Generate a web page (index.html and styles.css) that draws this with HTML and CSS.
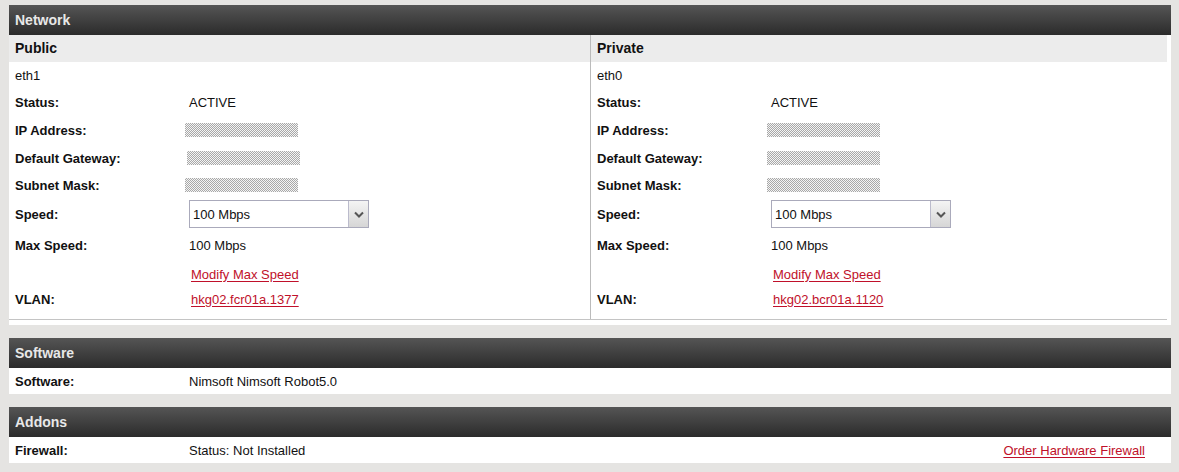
FILE: index.html
```html
<!DOCTYPE html>
<html>
<head>
  <meta charset="utf-8">
  <title>Server details</title>
<link rel="stylesheet" href="styles.css">
</head>
<body>
  <div class="panel">
    <div class="panel-head">Network</div>
    <div class="net">
      <div class="net-col">
        <div class="col-head">Public</div>
        <div class="row r-if"><span class="val-plain">eth1</span></div>
        <div class="row r-28"><span class="label">Status:</span><span class="val">ACTIVE</span></div>
        <div class="row r-28"><span class="label">IP Address:</span><span class="masked"></span></div>
        <div class="row r-28"><span class="label">Default Gateway:</span><span class="masked shift"></span></div>
        <div class="row r-26"><span class="label">Subnet Mask:</span><span class="masked"></span></div>
        <div class="row r-speed"><span class="label">Speed:</span>
          <div class="select"><span>100 Mbps</span><span class="select-btn"><svg width="10" height="7" viewBox="0 0 10 7"><path d="M1 1.5 L5 5.5 L9 1.5" fill="none" stroke="#555" stroke-width="2"/></svg></span></div>
        </div>
        <div class="row r-30"><span class="label">Max Speed:</span><span class="val">100 Mbps</span></div>
        <div class="row r-28"><span class="label"></span><a class="link" href="#">Modify Max Speed</a></div>
        <div class="row r-vlan"><span class="label">VLAN:</span><a class="link" href="#">hkg02.fcr01a.1377</a></div>
      </div>
      <div class="net-col right">
        <div class="col-head">Private</div>
        <div class="row r-if"><span class="val-plain">eth0</span></div>
        <div class="row r-28"><span class="label">Status:</span><span class="val">ACTIVE</span></div>
        <div class="row r-28"><span class="label">IP Address:</span><span class="masked"></span></div>
        <div class="row r-28"><span class="label">Default Gateway:</span><span class="masked"></span></div>
        <div class="row r-26"><span class="label">Subnet Mask:</span><span class="masked"></span></div>
        <div class="row r-speed"><span class="label">Speed:</span>
          <div class="select"><span>100 Mbps</span><span class="select-btn"><svg width="10" height="7" viewBox="0 0 10 7"><path d="M1 1.5 L5 5.5 L9 1.5" fill="none" stroke="#555" stroke-width="2"/></svg></span></div>
        </div>
        <div class="row r-30"><span class="label">Max Speed:</span><span class="val">100 Mbps</span></div>
        <div class="row r-28"><span class="label"></span><a class="link" href="#">Modify Max Speed</a></div>
        <div class="row r-vlan"><span class="label">VLAN:</span><a class="link" href="#">hkg02.bcr01a.1120</a></div>
      </div>
    </div>
    <div class="net-foot"></div>
  </div>

  <div class="panel">
    <div class="panel-head">Software</div>
    <div class="row r-single"><span class="label">Software:</span><span class="val">Nimsoft Nimsoft Robot5.0</span></div>
  </div>

  <div class="panel">
    <div class="panel-head">Addons</div>
    <div class="row r-single"><span class="label">Firewall:</span><span class="val">Status: Not Installed</span><a class="link order" href="#">Order Hardware Firewall</a></div>
  </div>
</body>
</html>
```

FILE: styles.css
```css
html {
  margin: 0;
}

body {
  margin: 0;
  padding: 5px 8px 0 9px;
  background: #e5e4e2;
  font-family: "Liberation Sans", Arial, sans-serif;
  font-size: 13px;
  color: #111;
}

.panel {
  width: 1162px;
  background: #fff;
  margin-bottom: 13px;
}

.panel-head {
  height: 30px;
  line-height: 30px;
  padding-left: 6px;
  background: linear-gradient(#555, #2b2b2b);
  color: #e8e8e8;
  font-weight: bold;
  font-size: 14px;
}

.net {
  display: flex;
  width: 1158px;
}

.net-col {
  width: 581px;
  padding-bottom: 9px;
}

.net-col.right {
  width: 576px;
  border-left: 1px solid #bbb;
}

.net-foot {
  width: 1158px;
  height: 5px;
  border-top: 1px solid #c4c4c4;
}

.col-head {
  height: 27px;
  line-height: 27px;
  padding-left: 6px;
  background: #ececec;
  font-weight: bold;
  font-size: 14px;
}

.row {
  display: flex;
  align-items: center;
  padding-left: 6px;
}

.r-if { height: 26px; }
.r-26 { height: 26px; }
.r-28 { height: 28px; }
.r-30 { height: 30px; }
.r-speed { height: 32px; }
.r-vlan { height: 22px; }
.r-single { height: 26px; padding-right: 26px; }

.label {
  width: 174px;
  flex: none;
  font-weight: bold;
}

.val-plain,
.val {
  white-space: nowrap;
}

.masked {
  width: 113px;
  height: 14px;
  margin-left: -4px;
  background: repeating-conic-gradient(#a8a8a8 0 25%, #f4f4f4 0 50%) 0 0 / 2px 2px;
}

.masked.shift {
  margin-left: -2px;
}

.select {
  display: flex;
  align-items: center;
  width: 178px;
  height: 26px;
  border: 1px solid #aab;
  background: #fff;
}

.select span:first-child {
  flex: 1;
  padding-left: 3px;
}

.select-btn {
  width: 19px;
  height: 26px;
  display: flex;
  align-items: center;
  justify-content: center;
  border-left: 1px solid #bbc;
  background: linear-gradient(#f4f4f4, #d6d6d6);
}

.link {
  color: #c0102a;
  text-decoration: underline;
  text-underline-offset: 2px;
  margin-left: 2px;
}

.order {
  margin-left: auto;
}
```
